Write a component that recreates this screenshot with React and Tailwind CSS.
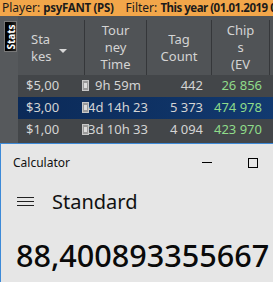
import React from "react";

const rows = [
  { stake: "$5,00", time: "9h 59m", gap: true, count: "442", chips: "26 856" },
  { stake: "$3,00", time: "4d 14h 23", count: "5 373", chips: "474 978", selected: true },
  { stake: "$1,00", time: "3d 10h 33", count: "4 094", chips: "423 970" },
];

function Ghost() {
  return (
    <span className="relative inline-block w-[8px] h-[12px] mr-[1px] align-middle">
      <span className="absolute left-0 top-0 w-[7px] h-[11px] border border-[#c8c8c8] bg-[#9a9a9a]" />
      <span className="absolute left-[2px] top-[3px] w-[3px] h-[5px] bg-[#dcdcdc]" />
    </span>
  );
}

function HeaderCell({ lines, width, align = "center", arrow, last }) {
  return (
    <div
      className={`relative flex h-full shrink-0 ${last ? "" : "border-r border-[#35373a]"} ${width}`}
    >
      <div
        className={`flex flex-col justify-center w-full leading-[17px] ${
          align === "left" ? "items-start pl-[13px]" : "items-center"
        }`}
      >
        {lines.map((l) => (
          <span key={l}>{l}</span>
        ))}
      </div>
      {arrow && (
        <span className="absolute right-[17px] top-[29px] w-0 h-0 border-l-[4px] border-r-[4px] border-t-[4px] border-l-transparent border-r-transparent border-t-[#d8d8d8]" />
      )}
    </div>
  );
}

export default function App() {
  return (
    <div
      className="w-[273px] h-[282px] overflow-hidden flex flex-col bg-[#4b4e51]"
      style={{ fontFamily: '"Noto Sans", "Open Sans", sans-serif' }}
    >
      <div className="h-[16px] shrink-0 bg-[#f2a64a] text-[#1b1b1b] text-[12px] leading-[16px] pl-[2px] whitespace-nowrap overflow-hidden">
        Player: <b className="text-[11.5px] tracking-[-0.3px]">psyFANT (PS)</b>
        <span className="inline-block w-[12px]" />
        Filter: <b className="text-[11.5px] tracking-[-0.5px]">This year (01.01.2019 0:00</b>
      </div>

      <div className="flex h-[127px] shrink-0">
        <div className="w-[18px] shrink-0 bg-[#56595c] pt-[5px] pl-[4px]">
          <div className="w-[13px] h-[31px] bg-gradient-to-r from-[#000] to-[#2a2a2a] border border-[#777] flex items-center justify-center">
            <span className="-rotate-90 text-white text-[10px] font-bold leading-none">Stats</span>
          </div>
        </div>

        <div className="flex-1 flex flex-col text-[13px] text-[#d4d4d4]">
          <div className="flex h-[59px] bg-[#505356] pt-[4px]">
            <HeaderCell lines={["Sta", "kes"]} width="w-[67px]" align="left" arrow />
            <HeaderCell lines={["Tour", "ney", "Time"]} width="w-[62px]" />
            <HeaderCell lines={["Tag", "Count"]} width="w-[65px]" />
            <HeaderCell lines={["Chip", "s", "(EV"]} width="w-[58px]" />
            <div className="flex-1" />
          </div>

          {rows.map((r) => (
            <div
              key={r.stake}
              className={`flex items-center h-[22px] whitespace-nowrap ${
                r.selected
                  ? "bg-gradient-to-r from-[#0b2a58] via-[#0e3163] to-[#123a70]"
                  : "bg-[#434649]"
              }`}
            >
              <span className="w-[64px] pl-[8px] shrink-0">{r.stake}</span>
              <span className="w-[66px] shrink-0 flex items-center">
                <Ghost />
                {r.gap && <span className="w-[4px]" />}
                <span>{r.time}</span>
              </span>
              <span className="w-[55px] text-right shrink-0">{r.count}</span>
              <span className="w-[59px] text-right shrink-0 text-[#8fdc8a]">{r.chips}</span>
            </div>
          ))}
          <div className="flex-1 bg-[#434649]" />
        </div>
      </div>

      <div className="flex-1 bg-[#e6e6e6] border-t border-l border-[#3d8ad8] text-black overflow-hidden">
        <div className="flex items-center h-[35px] pl-[12px] pt-[2px] whitespace-nowrap">
          <span className="text-[12px] text-[#111]">Calculator</span>
          <div className="ml-auto flex items-center gap-[36px] pr-[15px]">
            <span className="w-[10px] h-px bg-black" />
            <span className="w-[10px] h-[10px] border border-black" />
          </div>
        </div>
        <div className="flex items-center h-[45px] pl-[16px]">
          <div className="flex flex-col gap-[3px] w-[17px]">
            <span className="h-px bg-[#222]" />
            <span className="h-px bg-[#222]" />
            <span className="h-px bg-[#222]" />
          </div>
          <span className="ml-[18px] text-[20px] text-[#111]">Standard</span>
        </div>
        <div className="pl-[15px] pt-[16px] text-[30.6px] font-medium leading-none whitespace-nowrap text-[#0a0a0a]">
          88,400893355667
        </div>
      </div>
    </div>
  );
}
